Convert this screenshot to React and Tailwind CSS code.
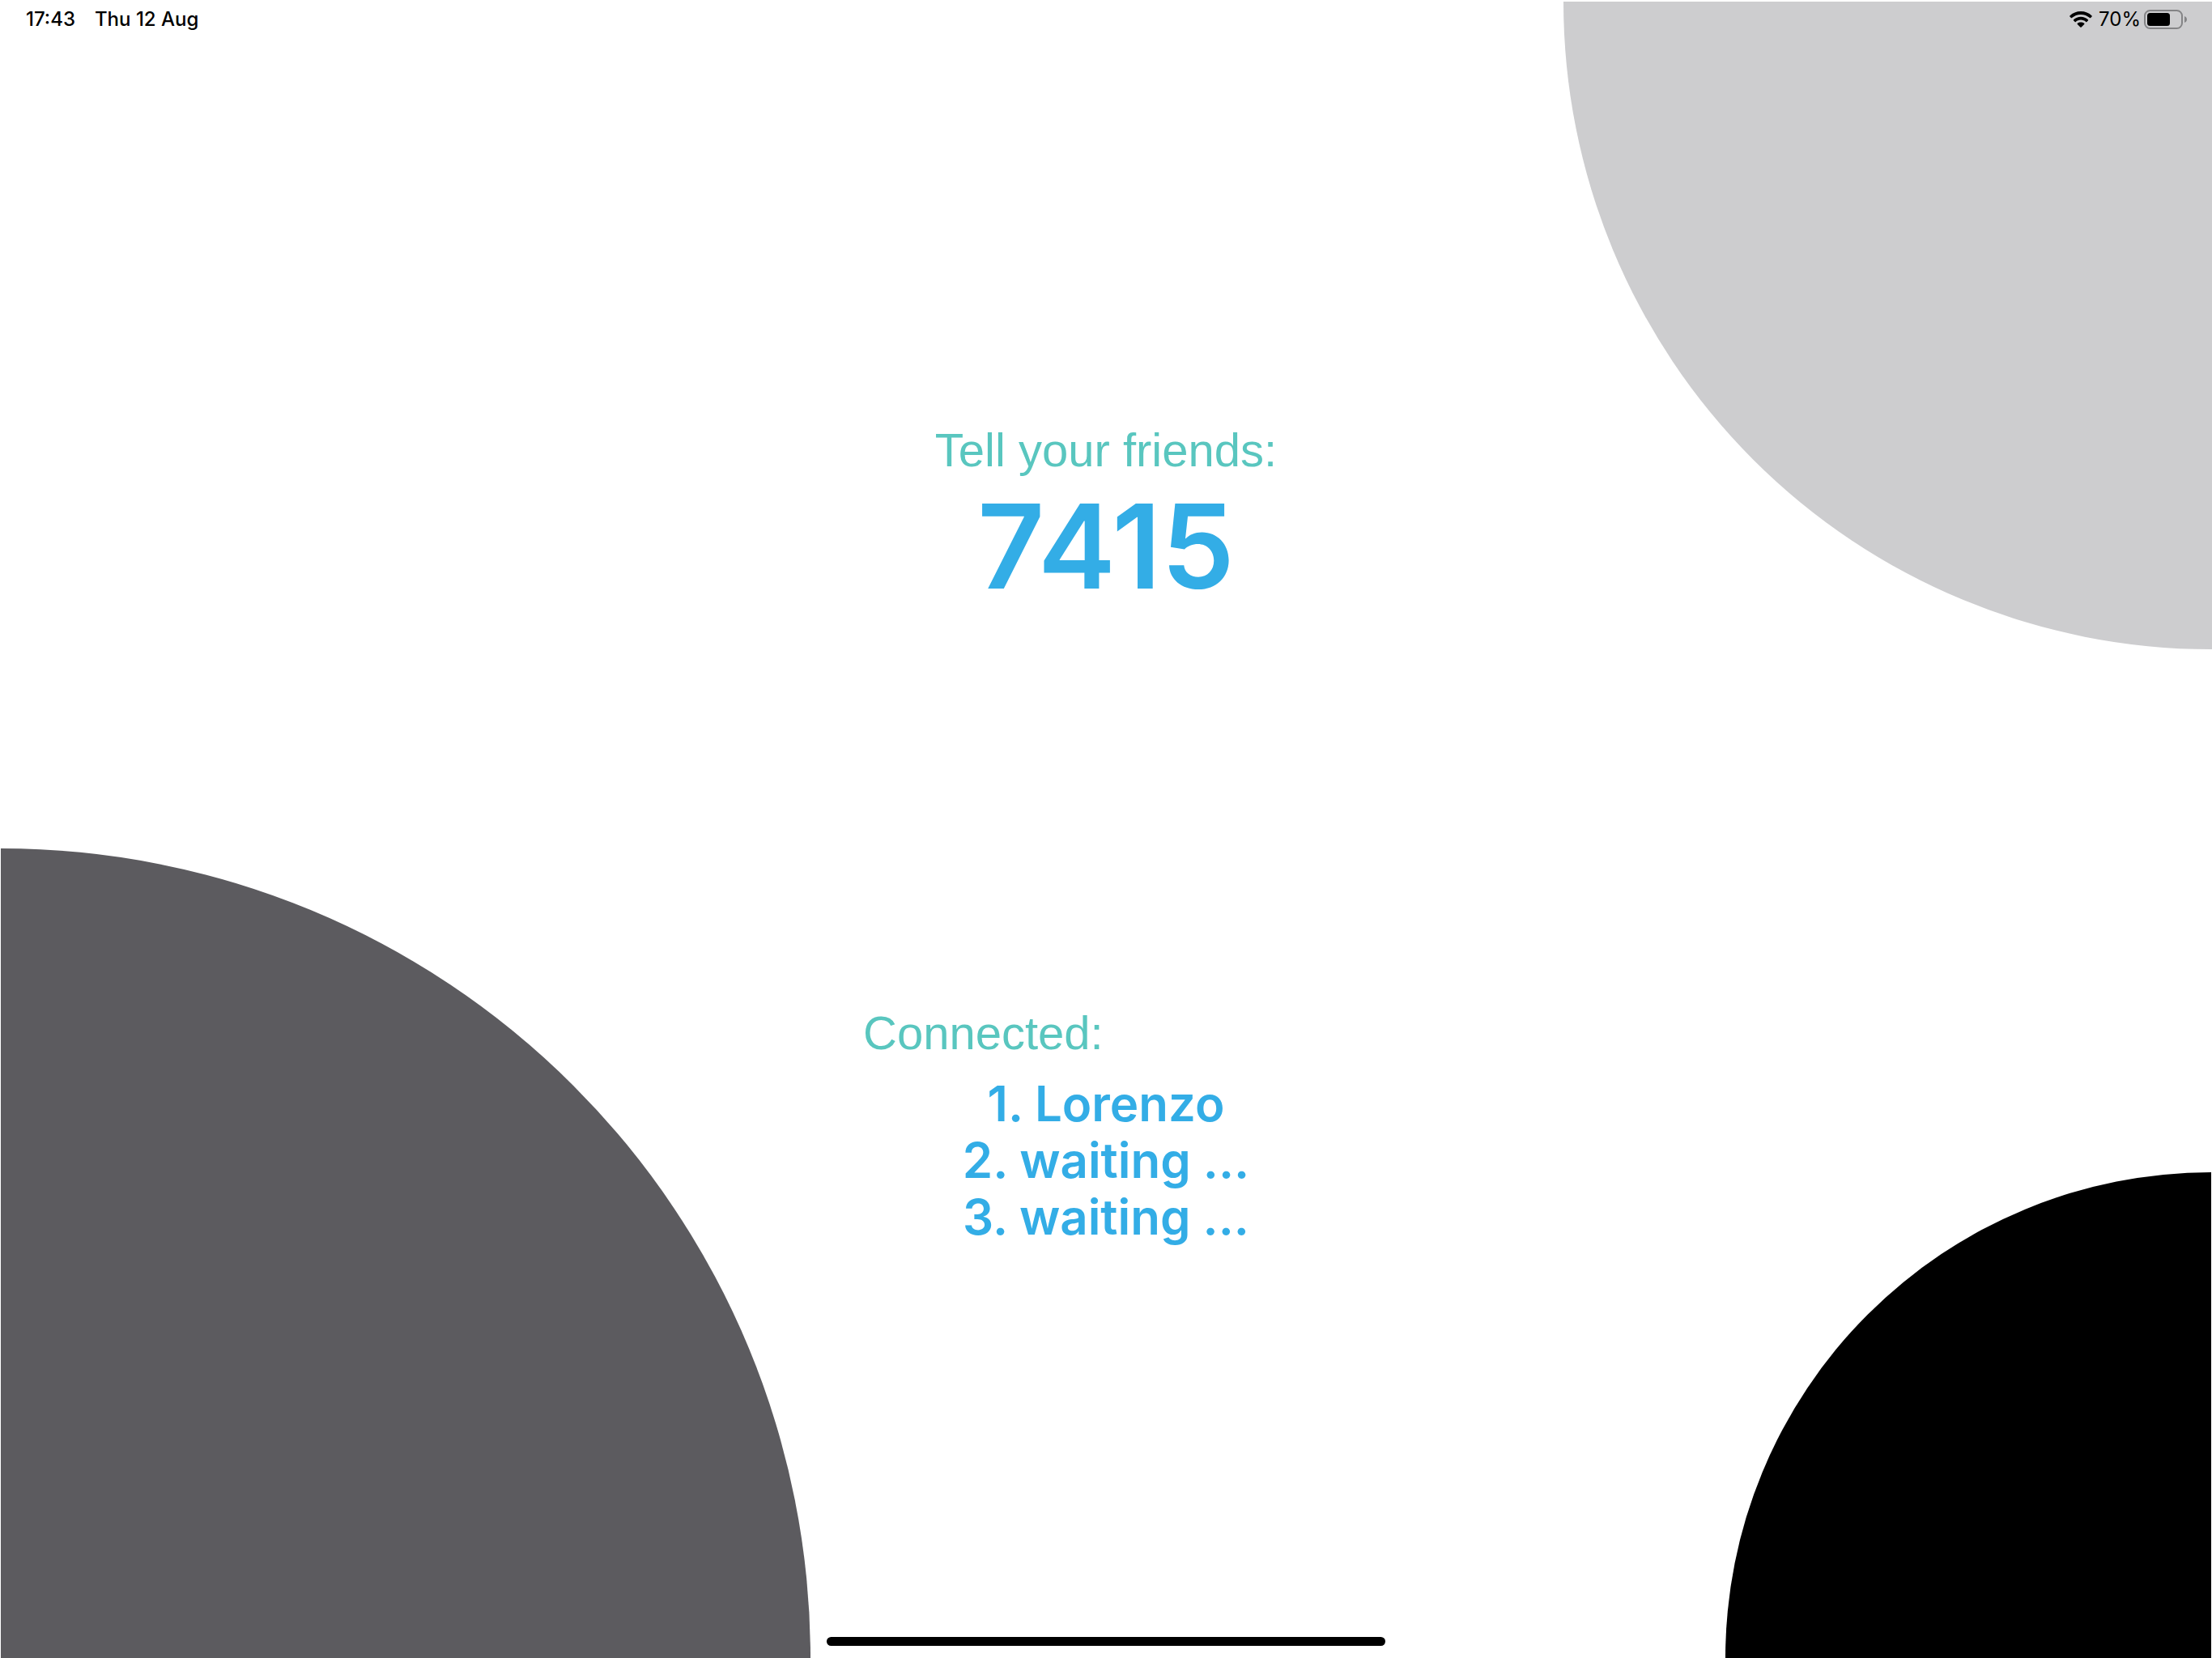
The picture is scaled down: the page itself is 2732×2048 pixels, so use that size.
const players = ["Lorenzo", "waiting ...", "waiting ..."];

function WifiIcon() {
  return (
    <svg className="h-5 w-7" viewBox="0 0 28 20" aria-label="Wi-Fi" role="img">
      <path d="M14 0C8.700 0 3.900 2 .4 5.400c-.4.400-.4.800 0 1.200l1.500 1.500c.3.300.8.300 1.100 0C5.900 5.400 9.800 3.900 14 3.900s8.100 1.500 11 4.200c.3.300.8.300 1.100 0l1.500-1.500c.4-.4.400-.8 0-1.200C24.100 2 19.300 0 14 0Z" />
      <path d="M14 6.800c-3.400 0-6.500 1.300-8.900 3.400-.4.400-.4.800 0 1.200l1.600 1.500c.3.300.7.300 1.100 0 1.700-1.400 3.800-2.300 6.200-2.300s4.500.9 6.200 2.300c.4.300.8.300 1.100 0l1.600-1.500c.4-.4.400-.8 0-1.200C20.500 8.100 17.400 6.800 14 6.800Z" />
      <path d="M14 13.400c-1.600 0-3 .5-4.200 1.400-.4.300-.4.800 0 1.200l3.500 3.400c.4.400 1 .4 1.400 0l3.500-3.400c.4-.4.400-.9 0-1.200-1.200-.9-2.600-1.400-4.200-1.400Z" />
    </svg>
  );
}

function BatteryIcon() {
  return (
    <svg className="h-6 w-[54px]" viewBox="0 0 54 24" aria-label="Battery" role="img">
      <rect x="1" y="1" width="46" height="22" rx="6.500" fill="none" stroke="#848486" strokeWidth="2" />
      <rect x="4" y="4" width="28" height="16" rx="3.500" />
      <path d="M50 8c1.800.7 3 2.200 3 4s-1.200 3.300-3 4Z" fill="#848486" />
    </svg>
  );
}

export default function App() {
  return (
    <div className="relative isolate flex min-h-screen flex-col overflow-hidden bg-white font-['Inter',sans-serif] text-black">
      <div aria-hidden="true" className="absolute top-[2px] right-0 -z-10 h-[800px] w-[801px] rounded-bl-full bg-[#cdcdcf]" />
      <div aria-hidden="true" className="absolute bottom-0 left-px -z-10 h-[1000px] w-[1000px] rounded-tr-full bg-[#5c5b5f]" />
      <div aria-hidden="true" className="absolute right-px bottom-0 -z-10 h-[600px] w-[600px] rounded-tl-full bg-black" />

      <header className="flex h-12 items-center justify-between pr-[30px] pl-8 text-2xl font-medium">
        <div className="flex gap-6">
          <time>17:43</time>
          <span>Thu 12 Aug</span>
        </div>
        <div className="flex items-center gap-2">
          <WifiIcon />
          <div className="flex items-center gap-1">
            <span className="font-normal">70%</span>
            <BatteryIcon />
          </div>
        </div>
      </header>

      <main className="flex flex-1 flex-col items-center justify-center gap-[482px]">
        <section className="text-center">
          <h1 className="font-['Liberation_Sans',sans-serif] text-[58px] leading-[72px] text-[#59c6bf]">Tell your friends:</h1>
          <p className="text-[144px] leading-[166px] font-semibold text-[#33ade6]">7415</p>
        </section>

        <section className="w-[600px]">
          <h2 className="font-['Liberation_Sans',sans-serif] text-[58px] leading-[72px] text-[#59c6bf]">Connected:</h2>
          <ol className="mt-4 text-center text-[60px] leading-[70px] font-semibold text-[#33ade6]">
            {players.map((name, i) => (
              <li key={i}>{`${i + 1}. ${name}`}</li>
            ))}
          </ol>
        </section>
      </main>

      <footer className="flex justify-center pt-3 pb-[15px]">
        <div className="h-[11px] w-[690px] rounded-full bg-black" />
      </footer>
    </div>
  );
}
